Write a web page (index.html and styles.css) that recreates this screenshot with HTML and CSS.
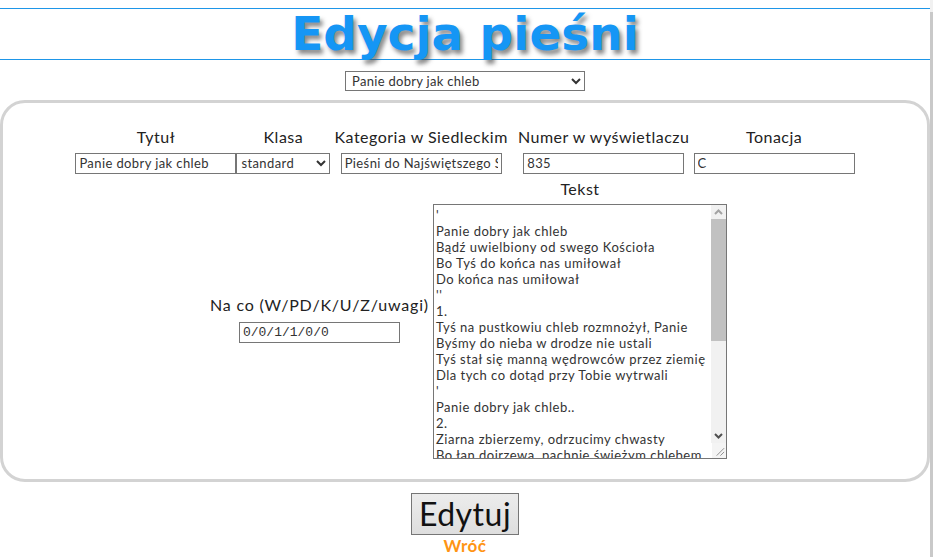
FILE: index.html
```html
<!DOCTYPE html>
<html lang="pl">
<head>
<meta charset="utf-8">
<title>Edycja pieśni</title>
<link rel="stylesheet" href="styles.css">
</head>
<body>
<div class="page">
  <div class="main">
    <header class="hdr"><h1 class="title">Edycja pieśni</h1></header>
    <div class="picker">
      <select class="song-select"><option>Panie dobry jak chleb</option></select>
    </div>
    <form class="card">
      <div class="row1">
        <div class="field"><label class="lbl">Tytuł</label><input class="inp" type="text" value="Panie dobry jak chleb"></div><div class="field"><label class="lbl">Klasa</label><select class="sel"><option>standard</option></select></div>
        <div class="field"><label class="lbl">Kategoria w Siedleckim</label><input class="inp" type="text" value="Pieśni do Najświętszego Sakramentu"></div>
        <div class="field field-num"><label class="lbl">Numer w wyświetlaczu</label><input class="inp" type="text" value="835"></div>
        <div class="field"><label class="lbl">Tonacja</label><input class="inp" type="text" value="C"></div>
      </div>
      <div class="row2">
        <div class="field"><label class="lbl lbl-wide">Na co (W/PD/K/U/Z/uwagi)</label><input class="inp mono" type="text" value="0/0/1/1/0/0"></div>
        <div class="field"><label class="lbl">Tekst</label>
          <div class="ta-wrap">
            <textarea class="txt">'
Panie dobry jak chleb
Bądź uwielbiony od swego Kościoła
Bo Tyś do końca nas umiłował
Do końca nas umiłował
''
1.
Tyś na pustkowiu chleb rozmnożył, Panie
Byśmy do nieba w drodze nie ustali
Tyś stał się manną wędrowców przez ziemię
Dla tych co dotąd przy Tobie wytrwali
'
Panie dobry jak chleb..
2.
Ziarna zbierzemy, odrzucimy chwasty
Bo łan dojrzewa, pachnie świeżym chlebem
Ty nas przyjmujesz, gdy z Tobą idziemy
Jednym stajemy się z Tobą w Kościele
'
Panie dobry jak chleb..
3.
Do Ciebie, Panie, z darami idziemy
Niesiemy chleb i wino na ołtarz
Przyjmij to wszystko, co dziś Ci dajemy
Bądź z nami zawsze, nie zostawiaj nas
'
Panie dobry jak chleb..</textarea>
            <div class="fake-sb" aria-hidden="true">
              <div class="sb-btn sb-up"><svg width="15" height="14" viewBox="0 0 15 14"><path d="M4 9 L7.5 5.5 L11 9" fill="none" stroke="#a3a3a3" stroke-width="2"/></svg></div>
              <div class="sb-track"><div class="sb-thumb"></div></div>
              <div class="sb-btn sb-down"><svg width="15" height="15" viewBox="0 0 15 15"><path d="M4 6 L7.5 9.5 L11 6" fill="none" stroke="#505050" stroke-width="2"/></svg></div>
              <div class="sb-corner"><svg width="15" height="15" viewBox="0 0 15 15"><path d="M13 5 L5 13 M13 9 L9 13" fill="none" stroke="#8a8a8a" stroke-width="1"/></svg></div>
            </div>
          </div>
        </div>
      </div>
    </form>
    <div class="actions">
      <button class="btn" type="button">Edytuj</button>
      <a class="back" href="#">Wróć</a>
    </div>
  </div>
  <div class="scroll-strip"><div class="scroll-thumb"></div></div>
</div>
</body>
</html>
```

FILE: styles.css
```css
html, body {
  margin: 0;
  padding: 0;
  background: #fff;
}
body {
  font-family: "Lato", "Open Sans", sans-serif;
  color: #222;
}
.page {
  display: flex;
  width: 933px;
  height: 557px;
  overflow: hidden;
}
.main {
  width: 930px;
  flex: none;
}
.scroll-strip {
  width: 3px;
  background: #f1f1f1;
  display: flex;
  flex-direction: column;
}
.scroll-thumb {
  margin-top: 12px;
  flex: 1;
  background: #c9c9c9;
}
.hdr {
  margin-top: 8px;
  border-top: 1px solid #1e96e8;
  border-bottom: 1px solid #1e96e8;
  height: 50px;
  text-align: center;
}
.title {
  margin: 0;
  font-family: "DejaVu Sans", sans-serif;
  font-weight: bold;
  font-size: 47px;
  line-height: 50px;
  color: #1596f5;
  text-shadow: 3px 4px 4px rgba(60, 60, 60, 0.6);
}
.picker {
  margin-top: 10px;
  text-align: center;
  height: 20px;
}
.song-select {
  width: 240px;
  height: 20px;
  font-family: "Lato", sans-serif;
  font-size: 13px;
  letter-spacing: 0.3px;
  color: #333;
  border: 1px solid #767676;
  border-radius: 0;
  background: #fff;
  padding: 0 2px;
}
.card {
  margin: 10px 0 0 0;
  height: 376px;
  border: 3px solid #d3d3d3;
  border-radius: 25px;
  box-sizing: content-box;
  padding: 0;
  text-align: center;
}
.row1 {
  margin-top: 24px;
  text-align: center;
}
.field {
  display: inline-block;
  vertical-align: middle;
  text-align: center;
}
.field-num {
  margin-left: 6px;
}
.lbl {
  display: block;
  font-size: 16px;
  line-height: 19px;
  letter-spacing: 0.5px;
  margin-bottom: 6px;
  color: #222;
}
.lbl-wide {
  letter-spacing: 0.8px;
}
.inp {
  width: 161px;
  height: 21px;
  box-sizing: border-box;
  border: 1px solid #767676;
  border-radius: 0;
  padding: 0 3px;
  font-family: "Lato", sans-serif;
  font-size: 13px;
  letter-spacing: 0.4px;
  color: #333;
  margin: 0;
}
.mono {
  font-family: "Liberation Mono", monospace;
  letter-spacing: 0;
}
.sel {
  width: 94px;
  height: 21px;
  font-family: "Lato", sans-serif;
  font-size: 13px;
  letter-spacing: 0.4px;
  color: #333;
  border: 1px solid #767676;
  border-radius: 0;
  background: #fff;
  margin: 0;
}
.row2 {
  margin-top: 5px;
  padding-left: 7px;
  text-align: center;
}
.ta-wrap {
  position: relative;
  width: 294px;
  height: 255px;
}
.txt {
  width: 294px;
  height: 255px;
  box-sizing: border-box;
  border: 1px solid #767676;
  padding: 2px 17px 2px 2px;
  font-family: "Lato", sans-serif;
  font-size: 13px;
  line-height: 16px;
  letter-spacing: 0.5px;
  color: #333;
  resize: both;
  display: block;
  margin: 0;
  overflow: hidden;
}
.fake-sb {
  position: absolute;
  top: 1px;
  right: 1px;
  bottom: 1px;
  width: 15px;
  display: flex;
  flex-direction: column;
  background: #f1f1f1;
}
.sb-btn {
  flex: none;
  display: flex;
}
.sb-up {
  height: 14px;
}
.sb-down {
  height: 15px;
}
.sb-track {
  flex: 1;
  display: flex;
  flex-direction: column;
}
.sb-thumb {
  height: 122px;
  background: #c1c1c1;
}
.sb-corner {
  height: 15px;
  flex: none;
  background: #f4f4f4;
  border-left: 1px solid #fff;
  display: flex;
}
.actions {
  display: flex;
  flex-direction: column;
  align-items: center;
  margin-top: 11px;
}
.btn {
  font-family: "Lato", sans-serif;
  font-size: 32px;
  line-height: 36px;
  letter-spacing: 0.5px;
  padding: 2px 7px;
  border: 1px solid #767676;
  background: linear-gradient(#ececec, #dedede);
  color: #111;
  border-radius: 0;
}
.back {
  color: #ff9414;
  text-decoration: none;
  font-size: 17px;
  font-weight: bold;
  letter-spacing: 0.5px;
  line-height: 20px;
  margin-top: 1px;
}
```
